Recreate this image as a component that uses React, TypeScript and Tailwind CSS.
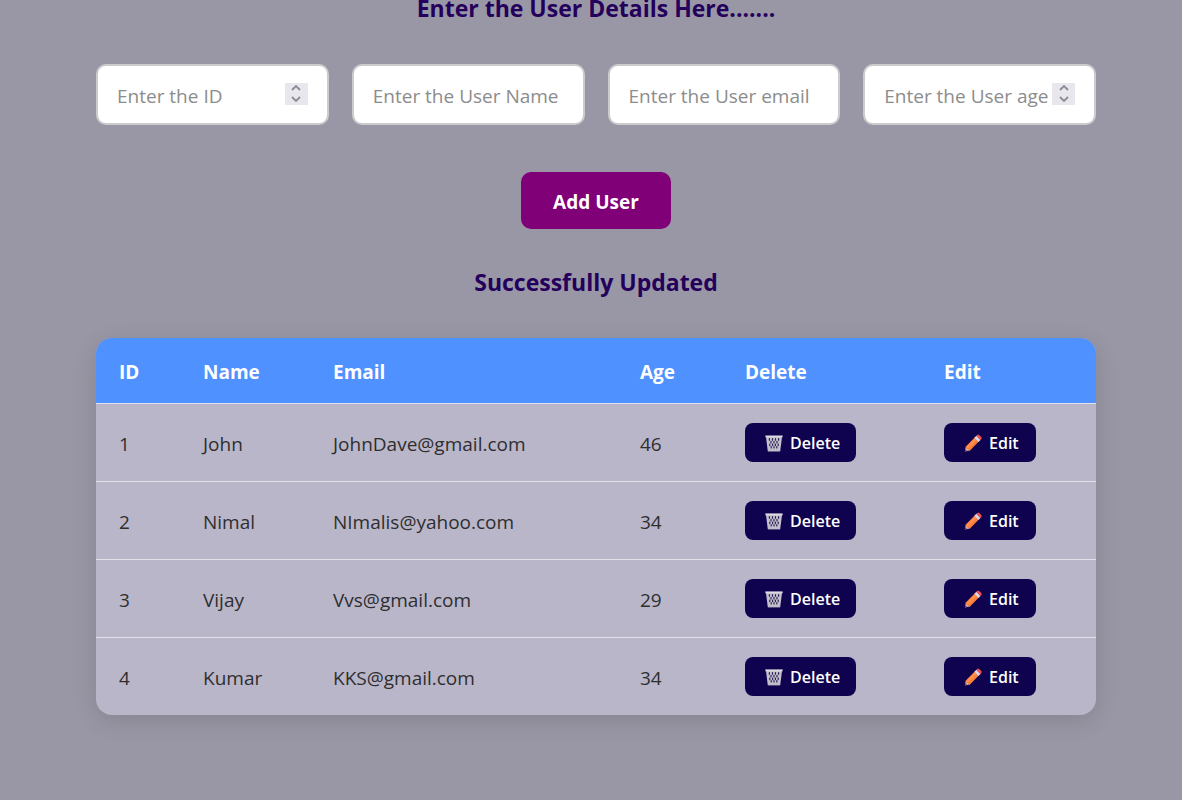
import { useState } from "react";

type User = { id: number; name: string; email: string; age: number };

const initialUsers: User[] = [
  { id: 1, name: "John", email: "JohnDave@gmail.com", age: 46 },
  { id: 2, name: "Nimal", email: "NImalis@yahoo.com", age: 34 },
  { id: 3, name: "Vijay", email: "Vvs@gmail.com", age: 29 },
  { id: 4, name: "Kumar", email: "KKS@gmail.com", age: 34 },
];

const fields = [
  { key: "id", label: "Enter the ID", type: "number" },
  { key: "name", label: "Enter the User Name", type: "text" },
  { key: "email", label: "Enter the User email", type: "email" },
  { key: "age", label: "Enter the User age", type: "number" },
] as const;

type FieldKey = (typeof fields)[number]["key"];
const emptyForm: Record<FieldKey, string> = { id: "", name: "", email: "", age: "" };

function TrashIcon() {
  return (
    <svg width="18" height="18" viewBox="0 0 18 18" fill="none" aria-hidden="true">
      <path d="M.9 2.4h16.2L15.2 17H2.8z" fill="#c4c0cc" />
      <path
        d="M4.4 4.6v1.6M7.5 4.6v1.6M10.5 4.6v1.6M13.6 4.6v1.6M6 7.3v1.6M9 7.3v1.6M12 7.3v1.6M4.8 10v1.6M7.6 10v1.6M10.4 10v1.6M13.2 10v1.6M6.2 12.6v1.4M9 12.6v1.4M11.8 12.6v1.4"
        stroke="#2b2056"
        strokeWidth="1.2"
        strokeLinecap="round"
      />
      <path d="M.4 1.4h17.2v1.9H.4z" fill="#dcd9df" />
      <path d="M2.9 15.6h12.2V17.4H2.9z" fill="#bfbac8" />
    </svg>
  );
}

function PencilIcon() {
  return (
    <svg width="18" height="18" viewBox="0 0 18 18" aria-hidden="true">
      <path d="M.9 17.4l.9-5 4.2 4.1z" fill="#d9a49a" />
      <path d="M.9 17.4l.4-2.2 1.8 1.8z" fill="#5c4560" />
      <path d="M1.8 12.4l8.9-8.9 4.1 4.1L6 16.5c-1 .1-1.7-.4-1.8-1.6-1.5 0-2.4-.9-2.4-2.5z" fill="#fa7f38" />
      <path d="M2.5 13l8.7-8.8 1.6 1.6-8.7 8.8z" fill="#ff9150" />
      <path d="M10.4 3.8l2-2 4.1 4.1-2 2z" fill="#ded8ea" />
      <path d="M12.4 1.8l.7-.7c.6-.6 1.5-.6 2.1 0l2 2c.6.6.6 1.5 0 2.1l-.7.7z" fill="#f9504e" />
    </svg>
  );
}

function Chevron({ up }: { up: boolean }) {
  return (
    <svg width="10" height="6" viewBox="0 0 10 6" fill="none" aria-hidden="true">
      <path d={up ? "M1 5l4-4 4 4" : "M1 1l4 4 4-4"} stroke="#8e8c99" strokeWidth="1.8" />
    </svg>
  );
}

export default function App() {
  const [users, setUsers] = useState(initialUsers);
  const [form, setForm] = useState(emptyForm);
  const [message, setMessage] = useState("Successfully Updated");

  const change = (key: FieldKey, value: string) => setForm((f) => ({ ...f, [key]: value }));

  const addUser = () => {
    const user = { id: Number(form.id), name: form.name, email: form.email, age: Number(form.age) };
    setUsers((list) => [...list.filter((u) => u.id !== user.id), user]);
    setForm(emptyForm);
    setMessage("Successfully Added");
  };

  const editUser = (u: User) =>
    setForm({ id: String(u.id), name: u.name, email: u.email, age: String(u.age) });

  const removeUser = (id: number) => {
    setUsers((list) => list.filter((u) => u.id !== id));
    setMessage("Successfully Deleted");
  };

  return (
    <main className="flow-root min-h-screen bg-[#9997a5] pr-[86px] pl-24 font-['Segoe_UI','Open_Sans',sans-serif]">
      <div className="-mt-2 flex flex-col items-center pb-16">
        <h1 className="text-[23px] leading-8 font-bold text-[#24005c]">Enter the User Details Here.......</h1>

        <form
          className="mt-10 flex w-full flex-col items-center"
          onSubmit={(e) => {
            e.preventDefault();
            addUser();
          }}
        >
          <div className="grid w-full grid-cols-4 gap-[23px]">
            {fields.map((f) => (
              <div
                key={f.key}
                className="flex h-[61px] items-center rounded-[10px] border-2 border-[#cccccc] bg-white px-[19px]"
              >
                <input
                  type={f.type}
                  aria-label={f.label}
                  placeholder={f.label}
                  value={form[f.key]}
                  onChange={(e) => change(f.key, e.target.value)}
                  className="h-full w-full min-w-0 [appearance:textfield] pt-0.5 text-[19px] text-[#222222] outline-none placeholder:text-[#8c8c8c] [&::-webkit-inner-spin-button]:appearance-none"
                />
                {f.type === "number" && (
                  <span className="mb-0.5 flex h-[22px] w-[23px] shrink-0 flex-col bg-[#e8e7ed]">
                    {[true, false].map((up) => (
                      <button
                        key={String(up)}
                        type="button"
                        aria-label={up ? "Increase" : "Decrease"}
                        className="flex flex-1 items-center justify-center"
                        onClick={() => change(f.key, String(Number(form[f.key]) + (up ? 1 : -1)))}
                      >
                        <Chevron up={up} />
                      </button>
                    ))}
                  </span>
                )}
              </div>
            ))}
          </div>
          <button
            type="submit"
            className="mt-[47px] h-[57px] w-[150px] rounded-[10px] bg-[#800078] pt-1 text-[19px] font-bold text-white"
          >
            Add User
          </button>
        </form>

        <h2 className="mt-[37px] text-[23px] leading-8 font-bold text-[#24005c]">{message}</h2>

        <div className="mt-10 w-full overflow-hidden rounded-2xl bg-[#bab6ca] shadow-[0_6px_24px_rgba(0,0,0,0.12)]">
          <table className="w-full table-fixed text-left text-[19px] text-[#2e2e2e]">
            <colgroup>
              <col className="w-[8.4%]" />
              <col className="w-[13%]" />
              <col className="w-[30.7%]" />
              <col className="w-[10.5%]" />
              <col className="w-[19.9%]" />
              <col className="w-[17.5%]" />
            </colgroup>
            <thead>
              <tr className="h-[65px] border-b border-[#e3e1ea] bg-[#4f91ff] text-white">
                {["ID", "Name", "Email", "Age", "Delete", "Edit"].map((h) => (
                  <th key={h} scope="col" className="px-[23px] pt-1 font-bold">
                    {h}
                  </th>
                ))}
              </tr>
            </thead>
            <tbody>
              {users.map((u) => (
                <tr key={u.id} className="h-[78px] border-b border-[#e3e1ea] last:border-b-0">
                  <td className="px-[23px] pt-1">{u.id}</td>
                  <td className="px-[23px] pt-1">{u.name}</td>
                  <td className="px-[23px] pt-1">{u.email}</td>
                  <td className="px-[23px] pt-1">{u.age}</td>
                  <td className="px-[23px]">
                    <button
                      type="button"
                      onClick={() => removeUser(u.id)}
                      className="flex h-[39px] w-[111px] items-center gap-[7px] rounded-lg bg-[#0f0350] pt-0.5 pl-5 text-base font-semibold text-white"
                    >
                      <TrashIcon />
                      Delete
                    </button>
                  </td>
                  <td className="px-[23px]">
                    <button
                      type="button"
                      onClick={() => editUser(u)}
                      className="flex h-[39px] w-[92px] items-center gap-[7px] rounded-lg bg-[#0f0350] pt-0.5 pl-5 text-base font-semibold text-white"
                    >
                      <PencilIcon />
                      Edit
                    </button>
                  </td>
                </tr>
              ))}
            </tbody>
          </table>
        </div>
      </div>
    </main>
  );
}
